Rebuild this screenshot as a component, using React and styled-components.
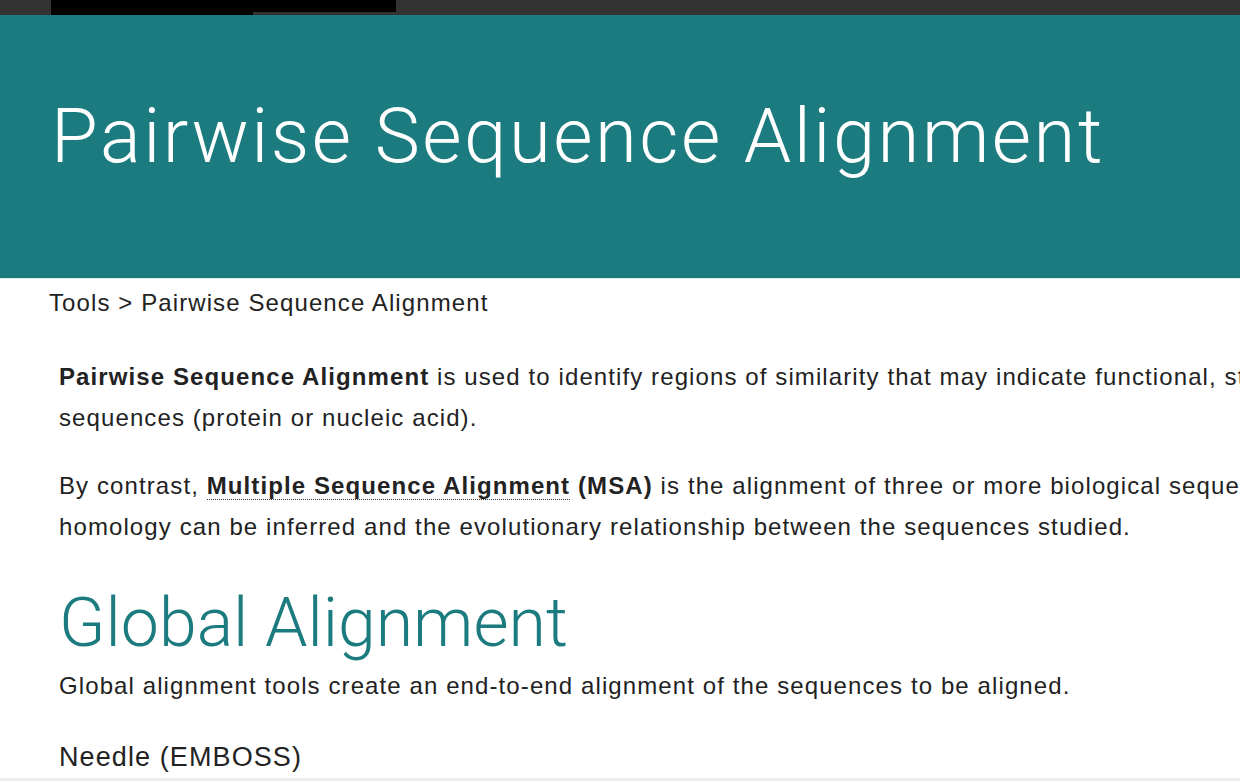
import React from "react";
import styled, { createGlobalStyle } from "styled-components";

const GlobalStyle = createGlobalStyle`
  html, body {
    margin: 0;
    padding: 0;
    background: #ffffff;
    overflow: hidden;
  }
  body {
    font-family: "Liberation Sans", Arial, sans-serif;
    color: #222222;
  }
`;

export const PageWrapper = styled.div`
  width: 1240px;
  height: 781px;
  overflow: hidden;
  display: flex;
  flex-direction: column;
  border-bottom: 3px solid #ececec;
  box-sizing: border-box;
`;

export const TopStrip = styled.div`
  height: 15px;
  flex-shrink: 0;
  background: #333333;
  display: flex;
  padding-left: 51px;

  .tab-a {
    width: 202px;
    height: 15px;
    background: #000000;
  }
  .tab-b {
    width: 143px;
    height: 12px;
    background: #000000;
  }
`;

export const Banner = styled.header`
  height: 264px;
  flex-shrink: 0;
  box-sizing: border-box;
  background: #1b7b7f;
  border-bottom: 1px solid #d9eeee;
  padding: 83px 0 0 51px;

  h1 {
    margin: 0;
    font-family: "Roboto", "Liberation Sans", sans-serif;
    font-weight: 300;
    font-size: 76px;
    line-height: 1;
    letter-spacing: 2.5px;
    color: #ffffff;
    white-space: nowrap;
  }
`;

export const Breadcrumb = styled.nav`
  padding: 8px 0 0 49px;
  font-size: 24px;
  line-height: 32px;
  letter-spacing: 1.1px;
  color: #222222;
  white-space: nowrap;
`;

export const Content = styled.main`
  padding: 37px 0 0 59px;
  display: flex;
  flex-direction: column;

  p {
    margin: 0 0 27px;
    font-size: 24px;
    line-height: 41px;
    letter-spacing: 1.1px;
    white-space: nowrap;
  }
  b {
    font-weight: 700;
  }
`;

export const TermLink = styled.span`
  font-weight: 700;
  border-bottom: 1px dotted #333333;
`;

export const SectionTitle = styled.h2`
  margin: 15px 0 8px;
  font-family: "Roboto", "Liberation Sans", sans-serif;
  font-weight: 300;
  font-size: 68px;
  line-height: 1;
  color: #1b7b7f;
  white-space: nowrap;
`;

export const ToolName = styled.h3`
  margin: 6px 0 0;
  font-weight: 400;
  font-size: 27px;
  line-height: 36px;
  letter-spacing: 1.1px;
  color: #222222;
`;

export default function App() {
  return (
    <>
      <GlobalStyle />
      <PageWrapper>
        <TopStrip>
          <div className="tab-a" />
          <div className="tab-b" />
        </TopStrip>
        <Banner>
          <h1>Pairwise Sequence Alignment</h1>
        </Banner>
        <Breadcrumb>Tools &gt; Pairwise Sequence Alignment</Breadcrumb>
        <Content>
          <p>
            <b>Pairwise Sequence Alignment</b> is used to identify regions of
            similarity that may indicate functional, structural and/or
            evolutionary relationships between two biological
            <br />
            sequences (protein or nucleic acid).
          </p>
          <p>
            By contrast, <TermLink>Multiple Sequence Alignment</TermLink>{" "}
            <b>(MSA)</b> is the alignment of three or more biological sequences
            of similar length. From the output of MSA applications,
            <br />
            homology can be inferred and the evolutionary relationship between
            the sequences studied.
          </p>
          <SectionTitle>Global Alignment</SectionTitle>
          <p>
            Global alignment tools create an end-to-end alignment of the
            sequences to be aligned.
          </p>
          <ToolName>Needle (EMBOSS)</ToolName>
        </Content>
      </PageWrapper>
    </>
  );
}
